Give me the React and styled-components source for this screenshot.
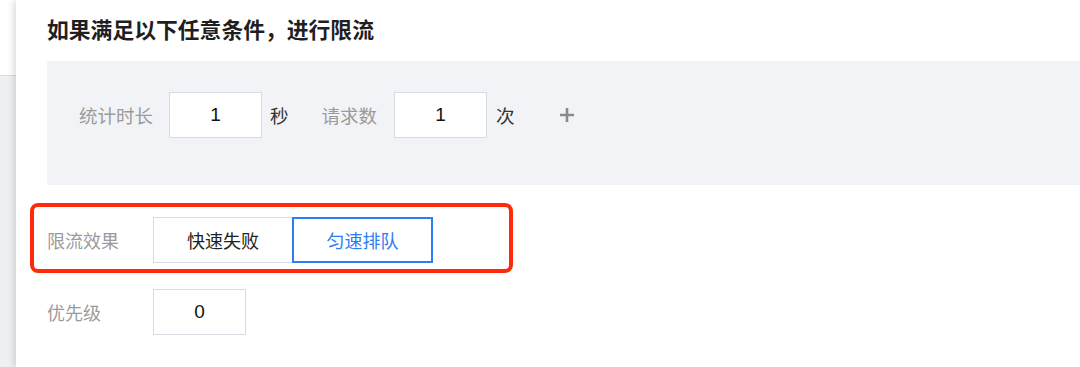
import styled, { createGlobalStyle } from "styled-components";

const GlobalStyle = createGlobalStyle`
  html, body {
    margin: 0;
    padding: 0;
    background: #ffffff;
  }
  body {
    font-family: "Noto Sans CJK SC", "Noto Sans", "Liberation Sans", sans-serif;
    overflow: hidden;
  }
`;

const Page = styled.div`
  display: flex;
  width: 1080px;
  height: 367px;
  overflow: hidden;
`;

const SideStrip = styled.div`
  display: flex;
  flex-direction: column;
  width: 16px;
  flex-shrink: 0;
`;

const StripTop = styled.div`
  height: 75px;
  background: #ffffff;
  border-bottom: 1px solid #d9dce2;
`;

const StripBottom = styled.div`
  flex: 1;
  background: #eef0f4;
`;

const Drawer = styled.div`
  flex: 1;
  background: #ffffff;
  padding-left: 31px;
  box-shadow: -3px 0 6px rgba(0, 0, 0, 0.12);
`;

const Title = styled.div`
  height: 61px;
  display: flex;
  align-items: center;
  padding-bottom: 4px;
  box-sizing: border-box;
  font-size: 21.8px;
  font-weight: 700;
  color: #1f1f1f;
  line-height: 1;
`;

const ConditionPanel = styled.div`
  height: 124px;
  background: #f2f3f7;
  display: flex;
  align-items: center;
  padding-left: 32px;
  padding-bottom: 16px;
  box-sizing: border-box;
`;

const Label = styled.span`
  font-size: 18.5px;
  color: #9b9b9b;
  white-space: nowrap;
  margin-right: ${(p) => p.$gap || 16}px;
  margin-left: ${(p) => p.$lead || 0}px;
`;

const Unit = styled.span`
  font-size: 18.5px;
  color: #333333;
  margin-left: ${(p) => p.$gap || 8}px;
`;

const NumberBox = styled.div`
  width: 93px;
  height: 46px;
  box-sizing: border-box;
  background: #ffffff;
  border: 1px solid #d6dbe4;
  display: flex;
  align-items: center;
  justify-content: center;
  font-family: "Liberation Sans", "Noto Sans", sans-serif;
  font-size: 19px;
  color: #111111;
`;

const AddButton = styled.button`
  margin-left: 44px;
  padding: 0;
  width: 16px;
  height: 16px;
  border: none;
  background: transparent;
  display: flex;
  align-items: center;
  justify-content: center;
  cursor: pointer;
`;

const Highlight = styled.div`
  margin: 18px 0 0 -17px;
  width: 483px;
  height: 70px;
  box-sizing: border-box;
  border: 4px solid #ff2a0a;
  border-radius: 8px;
  display: flex;
  align-items: center;
  padding-left: 13px;
  padding-top: 3px;
`;

const FieldRow = styled.div`
  display: flex;
  align-items: center;
  margin-top: ${(p) => p.$top || 0}px;
`;

const FieldLabel = styled.span`
  width: 106px;
  flex-shrink: 0;
  font-size: 18px;
  color: #9b9b9b;
`;

const Segmented = styled.div`
  display: flex;
`;

const Segment = styled.button`
  width: ${(p) => p.$width}px;
  height: 46px;
  box-sizing: border-box;
  background: #ffffff;
  font-family: inherit;
  font-size: 18px;
  padding: 0;
  cursor: pointer;
  border-style: solid;
  border-color: ${(p) => (p.$active ? "#2b7cf5" : "#d6dbe4")};
  border-width: ${(p) => (p.$active ? "2px" : "1px")};
  color: ${(p) => (p.$active ? "#2b7cf5" : "#222222")};
  margin-left: ${(p) => (p.$active ? "-1px" : "0")};
`;

const PlusIcon = () => (
  <svg width="16" height="16" viewBox="0 0 16 16">
    <path d="M8 1v14M1 8h14" stroke="#8a8a8a" strokeWidth="2.6" />
  </svg>
);

const App = () => {
  return (
    <>
      <GlobalStyle />
      <Page>
        <SideStrip>
          <StripTop />
          <StripBottom />
        </SideStrip>
        <Drawer>
          <Title>如果满足以下任意条件，进行限流</Title>
          <ConditionPanel>
            <Label>统计时长</Label>
            <NumberBox>1</NumberBox>
            <Unit>秒</Unit>
            <Label $lead={33} $gap={17}>
              请求数
            </Label>
            <NumberBox>1</NumberBox>
            <Unit $gap={9}>次</Unit>
            <AddButton aria-label="添加条件">
              <PlusIcon />
            </AddButton>
          </ConditionPanel>
          <Highlight>
            <FieldLabel>限流效果</FieldLabel>
            <Segmented>
              <Segment $width={140}>快速失败</Segment>
              <Segment $width={141} $active>
                匀速排队
              </Segment>
            </Segmented>
          </Highlight>
          <FieldRow $top={16}>
            <FieldLabel>优先级</FieldLabel>
            <NumberBox>0</NumberBox>
          </FieldRow>
        </Drawer>
      </Page>
    </>
  );
};

export default App;
